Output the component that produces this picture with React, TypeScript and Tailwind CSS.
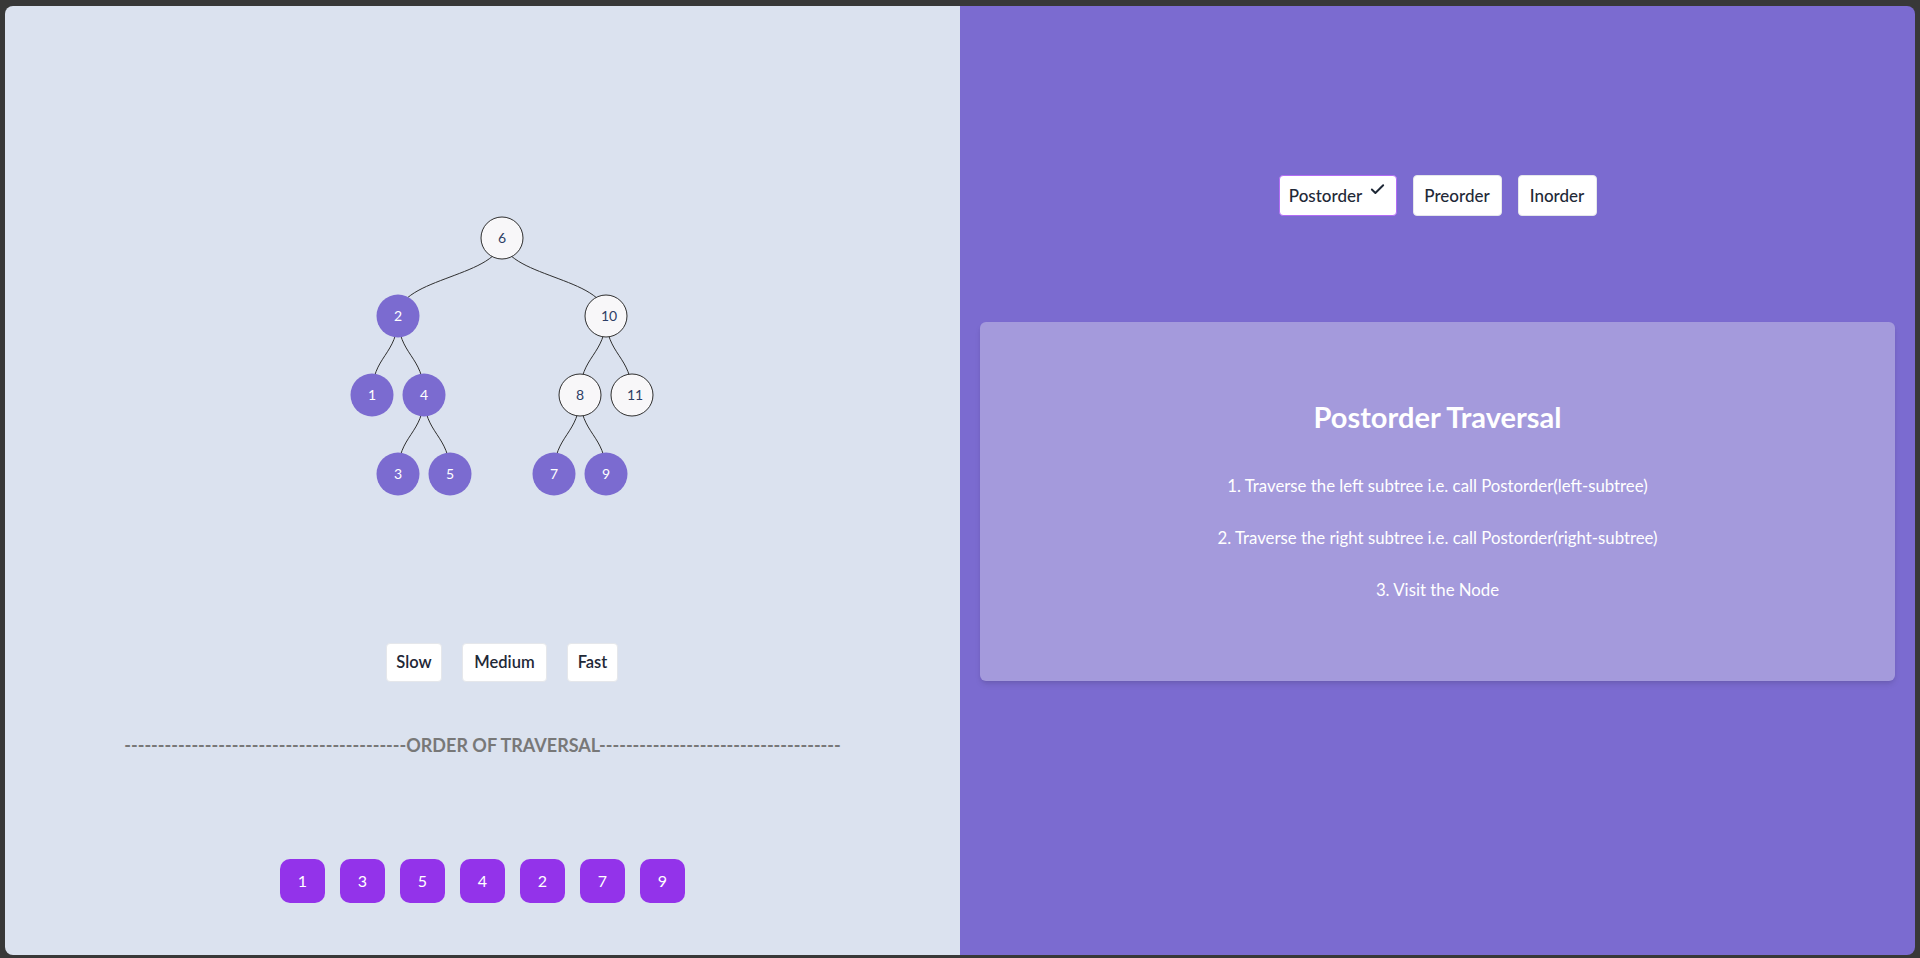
import { Check } from "lucide-react";

type TreeNode = { id: number; x: number; y: number; visited: boolean };

const nodes: TreeNode[] = [
  { id: 6, x: 150, y: 28, visited: false },
  { id: 2, x: 46, y: 106, visited: true },
  { id: 10, x: 254, y: 106, visited: false },
  { id: 1, x: 20, y: 185, visited: true },
  { id: 4, x: 72, y: 185, visited: true },
  { id: 8, x: 228, y: 185, visited: false },
  { id: 11, x: 280, y: 185, visited: false },
  { id: 3, x: 46, y: 264, visited: true },
  { id: 5, x: 98, y: 264, visited: true },
  { id: 7, x: 202, y: 264, visited: true },
  { id: 9, x: 254, y: 264, visited: true },
];

const links: [number, number][] = [
  [6, 2],
  [6, 10],
  [2, 1],
  [2, 4],
  [4, 3],
  [4, 5],
  [10, 8],
  [10, 11],
  [8, 7],
  [8, 9],
];

const order = [1, 3, 5, 4, 2, 7, 9];

const byId = (id: number) => nodes.find((n) => n.id === id)!;

const diagonal = (a: TreeNode, b: TreeNode) => {
  const my = (a.y + b.y) / 2;
  return `M${a.x},${a.y}C${a.x},${my} ${b.x},${my} ${b.x},${b.y}`;
};

const Tree = () => (
  <div className="relative w-[300px] h-[290px] ml-[39px]">
    <svg width="300" height="290" className="overflow-visible">
      {links.map(([p, c]) => (
        <path
          key={`${p}-${c}`}
          d={diagonal(byId(p), byId(c))}
          fill="none"
          stroke="#2f2f2f"
          strokeWidth={1}
        />
      ))}
      {nodes.map((n) => (
        <g key={n.id}>
          <circle
            cx={n.x}
            cy={n.y}
            r={n.visited ? 21.5 : 21}
            fill={n.visited ? "#7b6bd0" : "#f8f7f9"}
            stroke={n.visited ? "none" : "#2f2f2f"}
            strokeWidth={1}
          />
          <text
            x={n.id > 9 ? n.x + 3 : n.x}
            y={n.y + 5}
            textAnchor="middle"
            fontSize="14"
            fontFamily="Lato, 'Noto Sans', sans-serif"
            fill={n.visited ? "#ffffff" : "#2e3f66"}
          >
            {n.id}
          </text>
        </g>
      ))}
    </svg>
  </div>
);

const dashesLeft = "-".repeat(42);
const dashesRight = "-".repeat(36);

export default function App() {
  return (
    <div className="w-full h-[958px] bg-[#383838] pt-[6px] px-[5px] pb-[3px] font-['Lato','Noto_Sans',sans-serif]">
      <div className="flex h-full rounded-lg overflow-hidden">
        {/* left: tree + speed + order */}
        <div className="w-[955px] bg-[#dbe2ef] flex flex-col items-center pt-[204px]">
          <Tree />

          <div className="flex gap-5 mt-[143px] ml-[39px]">
            <button className="w-[56px] h-[39px] rounded bg-white border border-[#e5e7eb] text-[16.5px] font-semibold text-[#1f2937]">
              Slow
            </button>
            <button className="w-[85px] h-[39px] rounded bg-white border border-[#e5e7eb] text-[16.5px] font-semibold text-[#1f2937]">
              Medium
            </button>
            <button className="w-[51px] h-[39px] rounded bg-white border border-[#e5e7eb] text-[16.5px] font-semibold text-[#1f2937]">
              Fast
            </button>
          </div>

          <p className="mt-[51px] text-[18px] leading-6 font-bold text-[#787878] whitespace-nowrap">
            {dashesLeft}ORDER OF TRAVERSAL{dashesRight}
          </p>

          <div className="flex gap-[15px] mt-[102px]">
            {order.map((v) => (
              <div
                key={v}
                className="w-[45px] h-[44px] rounded-[10px] bg-[#9333ea] text-white text-[16px] flex items-center justify-center"
              >
                {v}
              </div>
            ))}
          </div>
        </div>

        {/* right: traversal picker + description */}
        <div className="flex-1 bg-[#7b6bd0] flex flex-col items-center pt-[169px]">
          <div className="flex gap-4">
            <button className="h-[41px] w-[118px] rounded bg-white border border-[#b26cf5] flex items-center justify-center gap-[7px] text-[17px] font-medium text-[#1f2937]">
              <span>Postorder</span>
              <Check className="w-[17px] h-[17px] -mt-3" strokeWidth={2.75} />
            </button>
            <button className="h-[41px] w-[89px] rounded bg-white border border-[#e5e7eb] text-[17px] font-medium text-[#1f2937]">
              Preorder
            </button>
            <button className="h-[41px] w-[79px] rounded bg-white border border-[#e5e7eb] text-[17px] font-medium text-[#1f2937]">
              Inorder
            </button>
          </div>

          <div className="self-stretch mx-5 mt-[106px] h-[359px] rounded-md bg-[#a49adc] shadow-md flex flex-col items-center pt-[77px] text-white">
            <h2 className="text-[29px] leading-[36px] font-bold">Postorder Traversal</h2>
            <div className="mt-[39px] flex flex-col items-center gap-7 text-[16.8px] leading-6">
              <p>1. Traverse the left subtree i.e. call Postorder(left-subtree)</p>
              <p>2. Traverse the right subtree i.e. call Postorder(right-subtree)</p>
              <p>3. Visit the Node</p>
            </div>
          </div>
        </div>
      </div>
    </div>
  );
}
